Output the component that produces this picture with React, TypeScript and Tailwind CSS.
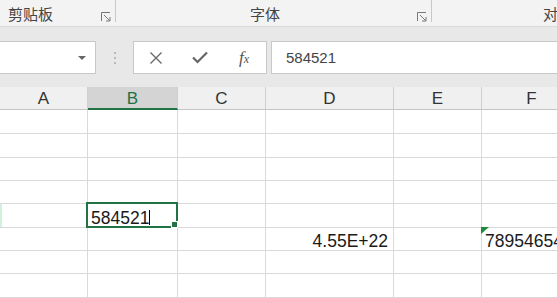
import React from "react";

const colWidths = [88, 90, 88, 128, 88, 100];
const colNames = ["A", "B", "C", "D", "E", "F"];
const rowHeights = [24, 24, 23, 23, 24, 23, 23, 24];

function Launcher() {
  return (
    <svg width="10" height="10" viewBox="0 0 10 10" className="block">
      <path d="M0.5 9V0.5H9" fill="none" stroke="#777" strokeWidth="1" />
      <path d="M3 3L8.5 8.5" stroke="#777" strokeWidth="1" />
      <path d="M5 9H9V5" fill="none" stroke="#777" strokeWidth="1" />
    </svg>
  );
}

function Cell({ col, row }: { col: number; row: number }) {
  const w = colWidths[col];
  const isSel = col === 1 && row === 4;
  const base =
    "relative shrink-0 border-r border-b border-[#d9d9d9] flex items-end overflow-visible";
  let content: React.ReactNode = null;
  let extra = "";
  if (isSel) {
    content = (
      <>
        <div className="pl-[3px] flex items-end text-[17.5px] leading-[18px] text-[#1a1a1a]">
          <span>584521</span>
          <span className="inline-block w-px h-[15px] bg-black mb-[2px]" />
        </div>
        <div className="absolute -left-[2px] -top-[2px] w-[92px] h-[26px] border-2 border-[#217346] z-10">
          <div className="absolute -right-[2px] -bottom-[2px] w-[7px] h-[7px] bg-[#217346] border border-white" />
        </div>
      </>
    );
  }
  if (col === 0 && row === 4) extra = "shadow-[inset_2px_0_0_#d3f0de]";
  if (col === 3 && row === 5) {
    content = (
      <div className="w-full text-right pr-[5px] text-[17.5px] leading-[18px] text-[#1a1a1a]">
        4.55E+22
      </div>
    );
  }
  if (col === 5 && row === 5) {
    content = (
      <>
        <svg width="8" height="7" viewBox="0 0 8 7" className="absolute -left-[1px] -top-[1px] z-10">
          <polygon points="0,0 8,0 0,7" fill="#1e8b3c" />
        </svg>
        <div className="pl-[3px] whitespace-nowrap text-[17.5px] leading-[18px] text-[#1a1a1a]">
          78954654
        </div>
      </>
    );
  }
  return (
    <div className={`${base} ${extra}`} style={{ width: w, height: rowHeights[row] }}>
      {content}
    </div>
  );
}

export default function App() {
  return (
    <div className="w-[557px] h-[298px] overflow-hidden bg-white font-['Liberation_Sans','Noto_Sans_CJK_SC',sans-serif]">
      {/* Ribbon group labels */}
      <div className="h-[27px] bg-[#f3f3f3] border-b border-[#dadada] flex items-start">
        <div className="w-[115px] h-[26px] shrink-0 flex items-center">
          <span className="ml-[8px] text-[15px] leading-none text-[#444] font-['Noto_Sans_CJK_SC',sans-serif]">
            剪贴板
          </span>
          <span className="ml-auto mr-[4px] mt-[8px]">
            <Launcher />
          </span>
        </div>
        <div className="w-px h-[22px] bg-[#c8c8c8] shrink-0" />
        <div className="w-[315px] h-[26px] shrink-0 flex items-center">
          <span className="ml-[134px] text-[15px] leading-none text-[#444] font-['Noto_Sans_CJK_SC',sans-serif]">
            字体
          </span>
          <span className="ml-auto mr-[4px] mt-[8px]">
            <Launcher />
          </span>
        </div>
        <div className="w-px h-[22px] bg-[#c8c8c8] shrink-0" />
        <div className="flex-1 min-w-0 h-[26px] flex items-center overflow-hidden">
          <span className="ml-[111px] whitespace-nowrap text-[15px] leading-none text-[#444] font-['Noto_Sans_CJK_SC',sans-serif]">
            对齐方式
          </span>
        </div>
      </div>

      {/* Formula bar */}
      <div className="h-[60px] bg-[#e8e8e8] flex items-start pt-[14px]">
        <div className="w-[96px] h-[33px] shrink-0 bg-white border border-l-0 border-[#c8c8c8] flex items-center justify-end pr-[9px]">
          <svg width="8" height="4" viewBox="0 0 8 4">
            <polygon points="0,0 8,0 4,4" fill="#666" />
          </svg>
        </div>
        <div className="w-[37px] h-[33px] shrink-0 flex flex-col items-center justify-center gap-[3px]">
          <div className="w-[2px] h-[2px] bg-[#aaa] rounded-full" />
          <div className="w-[2px] h-[2px] bg-[#aaa] rounded-full" />
          <div className="w-[2px] h-[2px] bg-[#aaa] rounded-full" />
        </div>
        <div className="w-[134px] h-[33px] shrink-0 bg-white border border-[#c8c8c8] flex items-center">
          <div className="w-[44px] flex justify-center">
            <svg width="14" height="14" viewBox="0 0 14 14">
              <path d="M1.5 1.5L12.5 12.5M12.5 1.5L1.5 12.5" stroke="#6b6b6b" strokeWidth="1.4" />
            </svg>
          </div>
          <div className="w-[44px] flex justify-center">
            <svg width="16" height="13" viewBox="0 0 16 13">
              <path d="M1 6.5L5.5 11L15 1.5" fill="none" stroke="#666" strokeWidth="2.2" />
            </svg>
          </div>
          <div className="w-[44px] flex justify-center">
            <span className="font-['Liberation_Serif',serif] italic text-[#555] leading-none">
              <span className="text-[17px]">f</span>
              <span className="text-[12px]">x</span>
            </span>
          </div>
        </div>
        <div className="ml-[4px] flex-1 h-[33px] bg-white border border-r-0 border-[#c8c8c8] flex items-center pl-[14px]">
          <span className="text-[15px] leading-none text-[#444]">584521</span>
        </div>
      </div>

      {/* Column headers */}
      <div className="h-[23px] flex bg-[#f0f0f0]">
        {colNames.map((n, i) => (
          <div
            key={n}
            className={
              i === 1
                ? "shrink-0 h-[23px] border-r border-[#cfcfcf] border-b-2 border-b-[#217346] bg-[#d4d4d4] text-center text-[17px] leading-[22px] pt-[1px] text-[#217346]"
                : "shrink-0 h-[23px] border-r border-b border-[#cfcfcf] border-b-[#c4c4c4] text-center text-[17px] leading-[22px] pt-[1px] text-[#333]"
            }
            style={{ width: colWidths[i] }}
          >
            {n}
          </div>
        ))}
      </div>

      {/* Rows */}
      {rowHeights.map((h, r) => (
        <div key={r} className="flex" style={{ height: h }}>
          {colWidths.map((_, c) => (
            <Cell key={c} col={c} row={r} />
          ))}
        </div>
      ))}
    </div>
  );
}
